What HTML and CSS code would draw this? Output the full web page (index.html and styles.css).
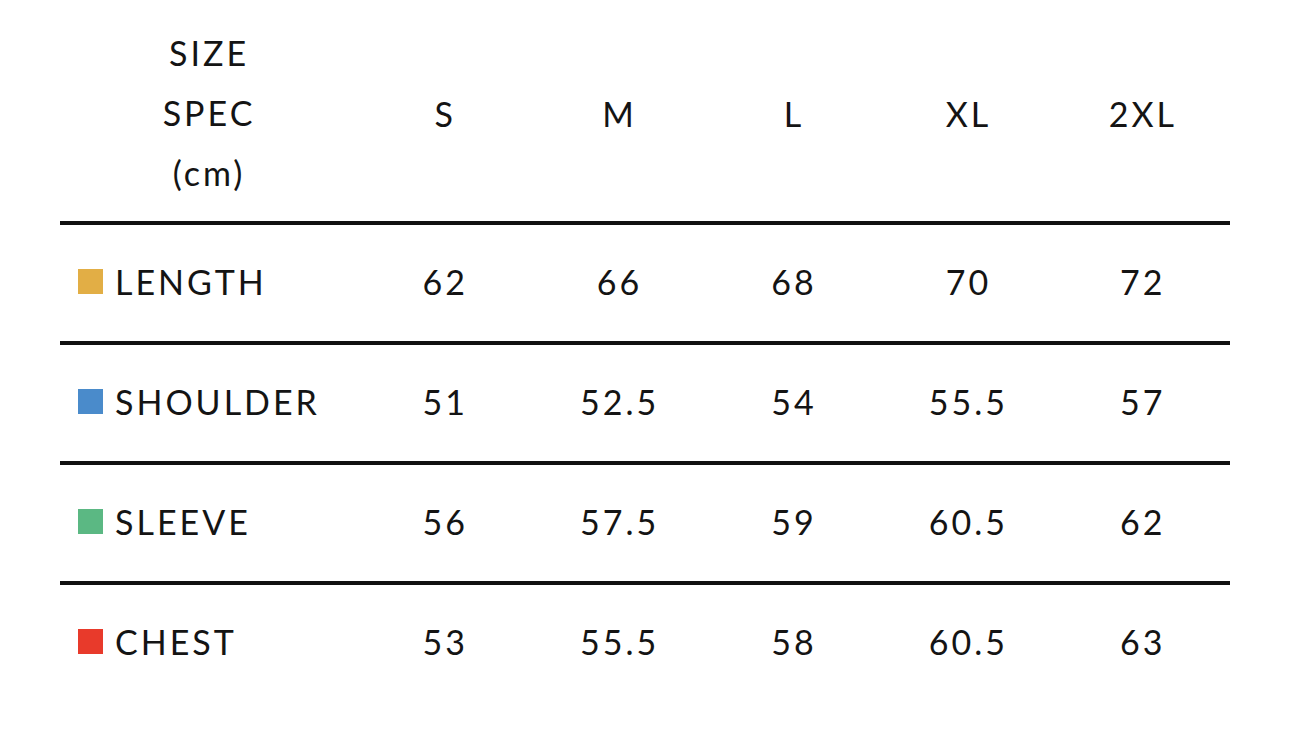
FILE: index.html
```html
<!DOCTYPE html>
<html>
<head>
<meta charset="utf-8">
<link rel="stylesheet" href="styles.css">
</head>
<body>
<div class="table">
  <div class="row head">
    <div class="spec">SIZE<br>SPEC<br>(cm)</div>
    <div class="cell">S</div>
    <div class="cell">M</div>
    <div class="cell">L</div>
    <div class="cell">XL</div>
    <div class="cell">2XL</div>
  </div>
  <div class="row">
    <div class="label"><span class="sq yellow"></span>LENGTH</div>
    <div class="cell">62</div><div class="cell">66</div><div class="cell">68</div><div class="cell">70</div><div class="cell">72</div>
  </div>
  <div class="row">
    <div class="label"><span class="sq blue"></span>SHOULDER</div>
    <div class="cell">51</div><div class="cell">52.5</div><div class="cell">54</div><div class="cell">55.5</div><div class="cell">57</div>
  </div>
  <div class="row">
    <div class="label"><span class="sq green"></span>SLEEVE</div>
    <div class="cell">56</div><div class="cell">57.5</div><div class="cell">59</div><div class="cell">60.5</div><div class="cell">62</div>
  </div>
  <div class="row last">
    <div class="label"><span class="sq red"></span>CHEST</div>
    <div class="cell">53</div><div class="cell">55.5</div><div class="cell">58</div><div class="cell">60.5</div><div class="cell">63</div>
  </div>
</div>
</body>
</html>
```
FILE: styles.css
```css
html, body {
  margin: 0;
  padding: 0;
  background: #ffffff;
}
body {
  font-family: "Lato", "Noto Sans", sans-serif;
  color: #141414;
  font-size: 34px;
  letter-spacing: 3px;
}
.table {
  width: 1170px;
  margin-left: 60px;
}
.row {
  display: grid;
  grid-template-columns: 298px repeat(5, 1fr);
  align-items: center;
  height: 113px;
  padding-bottom: 3px;
  border-bottom: 4px solid #111111;
}
.row.head {
  height: 180px;
  padding-top: 23px;
  padding-bottom: 18px;
}
.row.last {
  border-bottom: none;
}
.spec {
  text-align: center;
  line-height: 60px;
}
.cell {
  text-align: center;
}
.label {
  display: flex;
  align-items: center;
  gap: 12px;
  padding-left: 18px;
}
.sq {
  display: block;
  width: 25px;
  height: 25px;
  flex: none;
}
.yellow { background: #e2ae45; }
.blue { background: #4a8bcb; }
.green { background: #5bb883; }
.red { background: #e83a2b; }
```
